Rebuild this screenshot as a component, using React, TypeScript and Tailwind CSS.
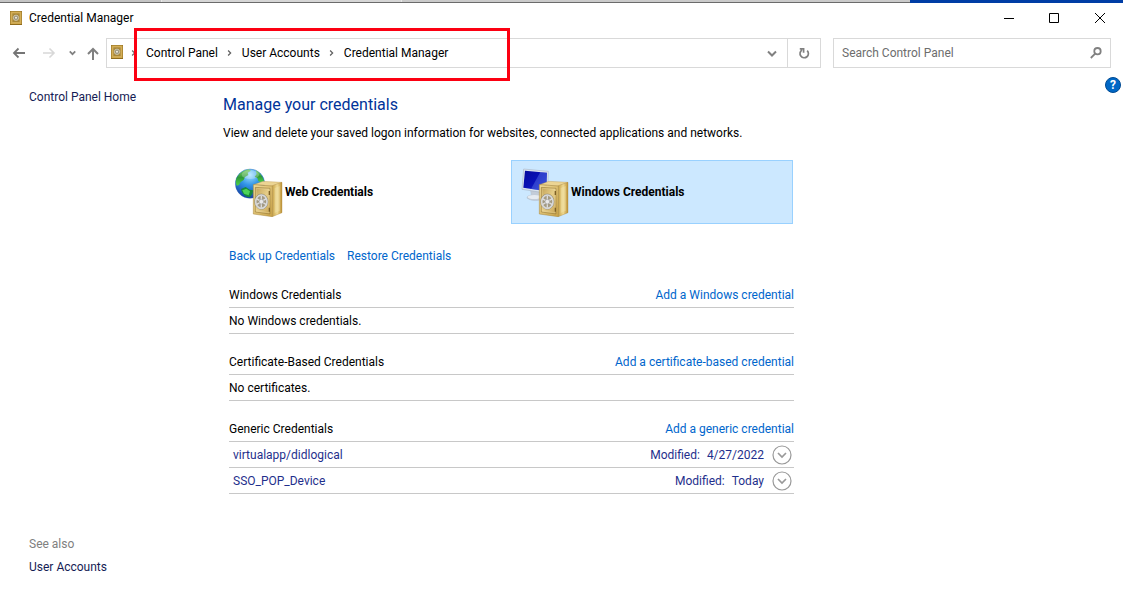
import type { ReactNode } from "react"

type Credential = {
    name: string
    modified: string
}

type Group = {
    title: string
    action: string
    empty?: string
    items: Credential[]
}

const crumbs = ["Control Panel", "User Accounts", "Credential Manager"]

const groups: Group[] = [
    {
        title: "Windows Credentials",
        action: "Add a Windows credential",
        empty: "No Windows credentials.",
        items: [],
    },
    {
        title: "Certificate-Based Credentials",
        action: "Add a certificate-based credential",
        empty: "No certificates.",
        items: [],
    },
    {
        title: "Generic Credentials",
        action: "Add a generic credential",
        items: [
            { name: "virtualapp/didlogical", modified: "4/27/2022" },
            { name: "SSO_POP_Device", modified: "Today" },
        ],
    },
]

function VaultIcon ({ className }: { className: string }) {
    return (
        <svg viewBox="0 0 12 14" className={ className } aria-hidden="true">
            <rect width="12" height="14" fill="#8f6b1c" />
            <rect x="0.5" y="0.5" width="11" height="12.5" fill="#d0a94f" />
            <rect x="2" y="2" width="8" height="9.5" fill="#a98738" stroke="#dfc072" strokeWidth="0.5" />
            <circle cx="6" cy="6.8" r="2.7" fill="#9c947c" stroke="#ddd6bd" strokeWidth="0.7" />
            <circle cx="6" cy="6.8" r="1" fill="#f4f0e2" />
        </svg>
    )
}

/* Safe drawn in front of both the globe and the monitor */
function Safe () {
    return (
        <g>
            <path d="M55 50L84 40L141 43L112 54Z" fill="#ecd594" stroke="#b3904a" strokeWidth="1" />
            <path d="M112 53L141 43V134L112 146Z" fill="url(#safeSide)" stroke="#a98435" strokeWidth="1" />
            <path d="M119 60L134 54V128L119 135Z" fill="#f5e6b0" opacity="0.45" />
            <path d="M55 50L112 54V146L55 138Z" fill="url(#safeFront)" stroke="#a98435" strokeWidth="1.5" />
            <path d="M61 58L105 61V138L61 132Z" fill="url(#safeDoor)" stroke="#8d7030" strokeWidth="1.5" />
            <path d="M64 61L102 64V134L64 129Z" fill="none" stroke="#f5e5b2" strokeWidth="1.2" opacity="0.7" />
            <path d="M103 69V81M103 119V131" stroke="#7d6126" strokeWidth="4" />
            <ellipse cx="79" cy="101" rx="20" ry="23" fill="#a39a83" stroke="#7b7868" strokeWidth="1.5" />
            <ellipse cx="79" cy="101" rx="17" ry="20" fill="none" stroke="#d6d7d8" strokeWidth="5" />
            <path d="M79 83V119M64 92L94 110M64 110L94 92" stroke="#dcdcdc" strokeWidth="4" />
            <circle cx="79" cy="101" r="7" fill="#e9e9e9" stroke="#8a8a8a" strokeWidth="1.5" />
        </g>
    )
}

function SafeGradients () {
    return (
        <defs>
            <linearGradient id="safeFront" x1="0" y1="0" x2="1" y2="1">
                <stop offset="0" stopColor="#f1dc9b" />
                <stop offset="1" stopColor="#c9a349" />
            </linearGradient>
            <linearGradient id="safeDoor" x1="0" y1="0" x2="1" y2="1">
                <stop offset="0" stopColor="#c3a358" />
                <stop offset="0.5" stopColor="#e6cd88" />
                <stop offset="1" stopColor="#c8a452" />
            </linearGradient>
            <linearGradient id="safeSide" x1="0" y1="0" x2="1" y2="0">
                <stop offset="0" stopColor="#c8a348" />
                <stop offset="0.5" stopColor="#efd992" />
                <stop offset="1" stopColor="#bd9337" />
            </linearGradient>
            <radialGradient id="ocean" cx="0.5" cy="0.2" r="0.8">
                <stop offset="0" stopColor="#a5e2ff" />
                <stop offset="0.45" stopColor="#3194e6" />
                <stop offset="1" stopColor="#143fa4" />
            </radialGradient>
            <linearGradient id="land" x1="0" y1="0" x2="0" y2="1">
                <stop offset="0" stopColor="#7fcf6c" />
                <stop offset="0.5" stopColor="#2f9a38" />
                <stop offset="1" stopColor="#4cd24a" />
            </linearGradient>
            <linearGradient id="screen" x1="0" y1="0" x2="1" y2="1">
                <stop offset="0" stopColor="#050a9c" />
                <stop offset="0.5" stopColor="#0a12b8" />
                <stop offset="1" stopColor="#2238d4" />
            </linearGradient>
        </defs>
    )
}

function WebIcon () {
    return (
        <svg viewBox="0 0 144 147" className="h-[49px] w-12 shrink-0" aria-hidden="true">
            <SafeGradients />
            <circle cx="45" cy="47" r="44" fill="url(#ocean)" stroke="#2a60ad" strokeWidth="1" />
            <path d="M6 28C14 14 27 6 41 4L48 8L38 14L40 21L30 27L26 36L17 42L12 51L5 53C1 44 2 35 6 28Z" fill="url(#land)" />
            <path d="M62 7C74 13 83 24 87 38L80 44L70 39L67 30L59 27L65 18Z" fill="url(#land)" />
            <path d="M18 63L32 57L44 65L55 67L52 78L44 88C30 86 21 77 18 63Z" fill="#178a3a" />
            <path d="M22 67L34 62L45 70L41 82L27 77Z" fill="#4dd358" />
            <ellipse cx="46" cy="20" rx="26" ry="13" fill="white" opacity="0.25" />
            <Safe />
        </svg>
    )
}

function WindowsIcon () {
    return (
        <svg viewBox="0 0 144 147" className="h-[49px] w-12 shrink-0" aria-hidden="true">
            <path d="M28 64L57 67V80L69 87C67 98 38 102 20 92C15 88 20 83 31 81Z" fill="#c3ccd8" stroke="#a9b5c4" strokeWidth="1" />
            <ellipse cx="40" cy="87" rx="20" ry="6" fill="#e6ebf1" />
            <path d="M8 3L82 10L80 76L3 64Z" fill="#dce5ef" stroke="#9fadbf" strokeWidth="1.5" />
            <path d="M12 8L78 14L76 70L7 59Z" fill="url(#screen)" />
            <path d="M58 12L78 14L76 70L30 63Z" fill="#6f8ff2" opacity="0.35" />
            <Safe />
        </svg>
    )
}

function Line ({ d, className, width = 2 }: { d: string; className: string; width?: number }) {
    return (
        <svg viewBox="0 0 16 16" className={ className } fill="none" stroke="currentColor" strokeWidth={ width } aria-hidden="true">
            <path d={ d } />
        </svg>
    )
}

function CredentialType ({ icon, label, selected }: { icon: ReactNode; label: string; selected?: boolean }) {
    return (
        <button
            type="button"
            aria-pressed={ !!selected }
            className={ `flex h-16 items-center gap-[2px] border pl-[9px] text-left font-bold ${selected ? "border-[#99d1ff] bg-[#cce8ff]" : "border-transparent"}` }
        >
            { icon }
            { label }
        </button>
    )
}

function TitleBar () {
    return (
        <header className="flex h-[30px] items-center pl-[10px]">
            <VaultIcon className="h-[14px] w-3" />
            <h1 className="ml-[7px] flex-1">Credential Manager</h1>
            <button type="button" aria-label="Minimize" className="flex h-full w-[45px] items-center justify-center">
                <Line d="M3 8.5H13" width={ 1 } className="size-4" />
            </button>
            <button type="button" aria-label="Maximize" className="flex h-full w-[45px] items-center justify-center">
                <Line d="M3.5 3.5H12.5V12.5H3.5Z" width={ 1 } className="size-4" />
            </button>
            <button type="button" aria-label="Close" className="flex h-full w-[47px] items-center justify-center">
                <Line d="M3 3L13 13M13 3L3 13" width={ 1 } className="size-4" />
            </button>
        </header>
    )
}

function AddressBar () {
    return (
        <div className="mt-[5px] flex h-[30px] pr-3 pl-[11px] text-[#808080]">
            <div className="flex w-[95px] shrink-0 items-center">
                <button type="button" aria-label="Back">
                    <Line d="M14 8H3M7.5 3.5L3 8L7.5 12.5" width={ 1.8 } className="size-4 text-[#757575]" />
                </button>
                <button type="button" aria-label="Forward" className="ml-[14px] text-[#d8d8d8]">
                    <Line d="M2 8H13M8.5 3.5L13 8L8.5 12.5" width={ 1.6 } className="size-4" />
                </button>
                <button type="button" aria-label="Recent locations" className="ml-[10px]">
                    <Line d="M4 5L8 9L12 5" className="size-[11px]" width={ 2.5 } />
                </button>
                <button type="button" aria-label="Up" className="ml-[7px]">
                    <Line d="M8 15V4M3 9L8 4L13 9" className="size-4" />
                </button>
            </div>

            <div className="relative flex min-w-0 flex-1 border border-[#d9d9d9]">
                <nav aria-label="Breadcrumb" className="flex flex-1 items-center pl-1 text-black">
                    <VaultIcon className="mb-[2px] h-[14px] w-3" />
                    <Line d="M5 4L9 8L5 12" className="ml-[6px] size-[10px] text-[#707070]" />
                    <ol className="ml-[7px] flex items-center">
                        { crumbs.map((crumb, idx) => (
                            <li key={ crumb } className="flex items-center">
                                { idx > 0 && <Line d="M5 4L9 8L5 12" className="mx-[7px] size-[10px] text-[#606060]" /> }
                                <a href="#">{ crumb }</a>
                            </li>
                        )) }
                    </ol>
                </nav>
                <button type="button" aria-label="Previous locations" className="flex w-[31px] items-center justify-center">
                    <Line d="M4 6.5L8 10.5L12 6.5" className="size-4" />
                </button>
                <button type="button" aria-label="Refresh" className="flex w-[33px] items-center justify-center border-l border-[#d9d9d9]">
                    <Line d="M11.2 5.6A4.2 4.2 0 1 1 6 5M3.8 3.8H7.6V7.8" width={ 1.7 } className="size-4" />
                </button>

                {/* Highlight around the path */ }
                <div className="pointer-events-none absolute -top-[11px] left-[27px] h-[53px] w-[376px] border-3 border-[#fc0012]" />
            </div>

            <label className="ml-3 flex w-[278px] shrink-0 items-center border border-[#d9d9d9] pr-2 pl-2">
                <input
                    type="text"
                    aria-label="Search Control Panel"
                    placeholder="Search Control Panel"
                    className="min-w-0 flex-1 outline-none placeholder:text-[#6d6d6d]"
                />
                <svg viewBox="0 0 12 12" className="size-3" fill="none" stroke="currentColor" strokeWidth="1.8" aria-hidden="true">
                    <circle cx="7.5" cy="4.2" r="3.2" />
                    <path d="M5.2 6.6L0.8 11" />
                </svg>
            </label>
        </div>
    )
}

function CredentialGroup ({ group }: { group: Group }) {
    return (
        <section className="mb-[15px] *:border-b *:border-[#c8c8c8]">
            <div className="flex h-[26px] items-center justify-between">
                <h3>{ group.title }</h3>
                <a href="#" className="text-[#0066cc]">{ group.action }</a>
            </div>
            { group.empty && <p className="flex h-[26px] items-center">{ group.empty }</p> }
            { group.items.map(item => (
                <div key={ item.name } className="flex h-[26px] items-center pr-[2px] pl-1 text-[#1f2f8c]">
                    <span className="flex-1">{ item.name }</span>
                    <span className="mr-[7px]">Modified:</span>
                    <span>{ item.modified }</span>
                    <button type="button" aria-label={ `Expand ${item.name}` } className="ml-2 text-[#999999]">
                        <svg viewBox="0 0 20 20" className="size-5" fill="none" stroke="currentColor" aria-hidden="true">
                            <circle cx="10" cy="10" r="9" strokeWidth="1.2" />
                            <path d="M6 8L10 12L14 8" strokeWidth="1.7" />
                        </svg>
                    </button>
                </div>
            )) }
        </section>
    )
}

export default function App () {
    return (
        <div className="flex min-h-screen flex-col bg-white font-[Roboto,'Open_Sans',sans-serif] text-[12px] leading-5 text-black">
            {/* Windows behind this one */ }
            <div className="flex h-[3px] border-b border-[#6b6b6b]">
                <div className="w-[14.4%] border-r border-[#e8e8e8] bg-[#c4c4c4]" />
                <div className="w-[21.4%] border-r border-[#e8e8e8] bg-[#d6d6d6]" />
                <div className="flex-1 bg-[#cacaca]" />
                <div className="-mb-px w-[19%] bg-[#003da5]" />
            </div>

            <TitleBar />
            <AddressBar />

            <div className="flex flex-1">
                <aside className="flex w-[223px] shrink-0 flex-col justify-between pt-[19px] pb-[17px] pl-[29px] text-[#151c55]">
                    <a href="#">Control Panel Home</a>
                    <div className="flex flex-col gap-[3px]">
                        <h2 className="text-[#808080]">See also</h2>
                        <a href="#">User Accounts</a>
                    </div>
                </aside>

                <main className="flex-1 pt-[25px]">
                    <div className="max-w-[571px]">
                        <h2 className="text-[16px] leading-6 text-[#003399]">Manage your credentials</h2>
                        <p className="mt-[6px]">View and delete your saved logon information for websites, connected applications and networks.</p>

                        <div className="mt-[17px] mr-px ml-[2px] grid grid-cols-2 gap-1">
                            <CredentialType icon={ <WebIcon /> } label="Web Credentials" />
                            <CredentialType icon={ <WindowsIcon /> } label="Windows Credentials" selected />
                        </div>

                        <div className="pl-[6px]">
                            <div className="mt-[22px] mb-4 flex gap-3 text-[#0066cc]">
                                <a href="#">Back up Credentials</a>
                                <a href="#">Restore Credentials</a>
                            </div>

                            { groups.map(group => <CredentialGroup key={ group.title } group={ group } />) }
                        </div>
                    </div>
                </main>

                <button
                    type="button"
                    aria-label="Help"
                    className="mt-[9px] mr-[2px] flex size-4 items-center justify-center rounded-full border border-[#004a93] bg-[#0067c5] font-bold text-white"
                >
                    ?
                </button>
            </div>
        </div>
    )
}
